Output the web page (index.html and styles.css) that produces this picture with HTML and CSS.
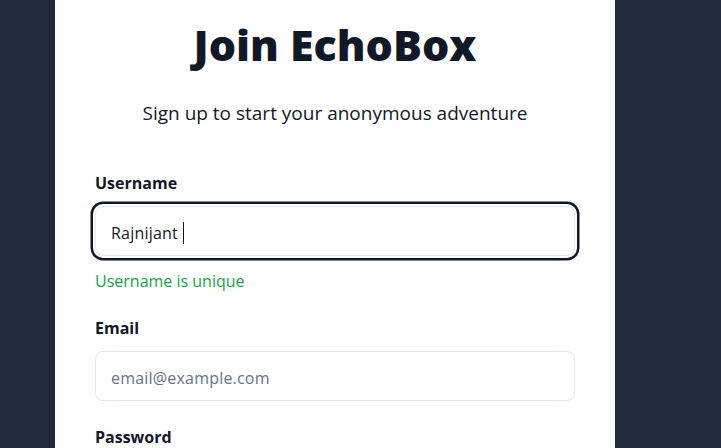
FILE: index.html
```html
<!DOCTYPE html>
<html lang="en">
<head>
<meta charset="utf-8">
<title>Join EchoBox</title>
<link rel="stylesheet" href="styles.css">
</head>
<body>
<main class="page">
  <section class="card">
    <header class="head">
      <h1 class="title">Join EchoBox</h1>
      <p class="subtitle">Sign up to start your anonymous adventure</p>
    </header>
    <form class="form">
      <div class="field">
        <label class="label" for="username">Username</label>
        <div class="input input-focus"><span class="value">Rajnijant</span><span class="caret"></span></div>
        <p class="hint">Username is unique</p>
      </div>
      <div class="field">
        <label class="label" for="email">Email</label>
        <div class="input"><span class="placeholder">email@example.com</span></div>
      </div>
      <div class="field">
        <label class="label" for="password">Password</label>
        <div class="input"><span class="placeholder"></span></div>
      </div>
    </form>
  </section>
</main>
</body>
</html>
```
FILE: styles.css
```css
* { box-sizing: border-box; }
html, body { margin: 0; padding: 0; }
body {
  background: #1f2937;
  font-family: "Open Sans", "Noto Sans", sans-serif;
  color: #111827;
  height: 448px;
  overflow: hidden;
}
.page {
  display: flex;
  justify-content: flex-start;
  padding-left: 55px;
}
.card {
  width: 560px;
  background: #ffffff;
  padding: 19px 40px 40px;
  min-height: 448px;
}
.head { text-align: center; }
.title {
  margin: 0;
  font-size: 43px;
  line-height: 52px;
  font-weight: 800;
  letter-spacing: 0;
  color: #111827;
}
.subtitle {
  margin: 29px 0 0;
  font-size: 19px;
  line-height: 26px;
  color: #111827;
}
.form { margin-top: 47px; display: flex; flex-direction: column; gap: 26px; }
.field { display: flex; flex-direction: column; }
.label {
  font-size: 16px;
  font-weight: 700;
  line-height: 20px;
  color: #111827;
}
.input {
  margin-top: 13px;
  height: 50px;
  border: 1px solid #e2e8f0;
  border-radius: 8px;
  background: #fff;
  display: flex;
  align-items: center;
  padding: 3px 15px 0;
  font-size: 16px;
  letter-spacing: 0.2px;
}
.input-focus {
  box-shadow: 0 0 0 2px #fff, 0 0 0 4.5px #0f172a;
}
.value { color: #111827; }
.caret { width: 1px; height: 22px; background: #111827; margin-left: 5px; }
.placeholder { color: #64748b; }
.hint {
  margin: 14px 0 0;
  font-size: 16px;
  line-height: 22px;
  color: #16a34a;
}
```
